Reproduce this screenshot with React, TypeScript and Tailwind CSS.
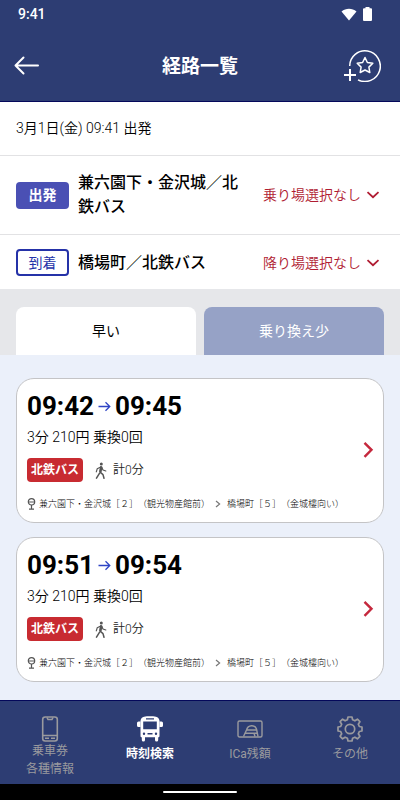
import { type FunctionComponent, type ReactNode } from "react";

interface StopRowProps {
  badge: string;
  badgeClass: string;
  name: string;
  action: string;
  rowClass: string;
}

interface Route {
  departure: string;
  arrival: string;
  summary: string;
  operator: string;
  walk: string;
  from: string;
  to: string;
}

interface NavItemProps {
  icon: ReactNode;
  active?: boolean;
  children: ReactNode;
}

const routes: Route[] = [
  {
    departure: "09:42",
    arrival: "09:45",
    summary: "3分 210円 乗換0回",
    operator: "北鉄バス",
    walk: "計0分",
    from: "兼六園下・金沢城［２］（観光物産館前）",
    to: "橋場町［５］（金城樓向い）",
  },
  {
    departure: "09:51",
    arrival: "09:54",
    summary: "3分 210円 乗換0回",
    operator: "北鉄バス",
    walk: "計0分",
    from: "兼六園下・金沢城［２］（観光物産館前）",
    to: "橋場町［５］（金城樓向い）",
  },
];

const StatusBar: FunctionComponent = () => (
  <div className="flex h-7 items-center justify-between pr-7 pl-[18px] text-white">
    <span className="text-sm font-medium">9:41</span>
    <div className="flex items-center gap-[6px]">
      <svg width="16" height="13" viewBox="0 0 16 13" fill="currentColor">
        <path d="M8 12.500 0.500 3.400C4.800-.1 11.200-.1 15.500 3.400Z" />
      </svg>
      <svg width="9" height="14" viewBox="0 0 9 14" fill="currentColor">
        <path d="M2.500 0h4v1.300H8a1 1 0 0 1 1 1V13a1 1 0 0 1-1 1H1a1 1 0 0 1-1-1V2.300a1 1 0 0 1 1-1h1.500Z" />
      </svg>
    </div>
  </div>
);

const Header: FunctionComponent = () => (
  <header className="border-b border-[#04085a] bg-[#2d3d73] text-white">
    <StatusBar />
    <div className="grid h-[73px] grid-cols-[45px_1fr_40px] items-center pr-[19px] pl-[14px]">
      <button type="button" aria-label="戻る">
        <svg
          width="26"
          height="20"
          viewBox="0 0 26 20"
          fill="none"
          stroke="currentColor"
          strokeWidth="2"
          strokeLinecap="round"
          strokeLinejoin="round"
        >
          <path d="M24 10.500H1.500M9.500 2.500 1.500 10.500l8 8" />
        </svg>
      </button>
      <h1 className="pt-[5px] text-center text-[19px] font-bold">経路一覧</h1>
      <button type="button" aria-label="お気に入りに追加" className="justify-self-end">
        <svg
          width="38"
          height="34"
          viewBox="0 0 38 34"
          fill="none"
          stroke="currentColor"
          strokeWidth="1.500"
          strokeLinejoin="round"
        >
          <path d="M6.700 18A15.300 15.300 0 1 1 15 31.800" />
          <path d="m22 9.500 2.400 5 5.400.8-3.900 3.800.9 5.400-4.800-2.500-4.800 2.500.9-5.400-3.900-3.800 5.400-.8Z" />
          <path d="M1 27h12M7 21v12" strokeWidth="2" />
        </svg>
      </button>
    </div>
  </header>
);

const StopRow: FunctionComponent<StopRowProps> = ({
  badge,
  badgeClass,
  name,
  action,
  rowClass,
}) => (
  <div className={`flex items-center px-4 ${rowClass}`}>
    <span
      className={`flex h-[27px] w-[53px] shrink-0 items-center justify-center rounded text-sm ${badgeClass}`}
    >
      {badge}
    </span>
    <p className="ml-[9px] flex-1 text-base leading-6 font-medium">{name}</p>
    <button
      type="button"
      className="mr-1 ml-3 flex shrink-0 items-center gap-[5px] text-sm font-[350] text-[#b01c32]"
    >
      {action}
      <svg
        width="14"
        height="8"
        viewBox="0 0 14 8"
        fill="none"
        stroke="currentColor"
        strokeWidth="1.800"
      >
        <path d="m1.500 1.200 5.500 5 5.500-5" />
      </svg>
    </button>
  </div>
);

const WalkIcon: FunctionComponent = () => (
  <svg
    width="12"
    height="17"
    viewBox="0 0 12 17"
    fill="none"
    stroke="#555"
    strokeWidth="1.500"
    strokeLinecap="round"
    strokeLinejoin="round"
  >
    <circle cx="6.300" cy="1.900" r="1.500" fill="#555" stroke="none" />
    <path d="M5.800 5 5 10l3 2.600 1 3.600M4.600 11.200 1.500 16.200" />
    <path d="M5.800 5 2.200 6.800l-.9 3M6.600 5l1.400 3 2.800 1" strokeWidth="1.200" />
    <path d="M6.200 5.500 5.500 9.500" strokeWidth="2.400" />
  </svg>
);

const StopIcon: FunctionComponent = () => (
  <svg
    width="9"
    height="12"
    viewBox="0 0 9 12"
    fill="none"
    stroke="#555"
    strokeWidth="1.200"
    className="shrink-0"
  >
    <circle cx="4.500" cy="3.800" r="3.200" />
    <path d="M1.300 4h6.400M4.500 7v4M2 11.200h5" />
  </svg>
);

const RouteCard: FunctionComponent<{ route: Route }> = ({ route }) => (
  <button
    type="button"
    className="flex w-full items-center rounded-[18px] border border-[#c4c4c6] bg-white pt-[9px] pr-[9px] pb-[11px] pl-[10px] text-left"
  >
    <div className="min-w-0 flex-1">
      <div className="flex items-center gap-1 font-[Roboto] text-[26px] leading-9 font-bold">
        <span>{route.departure}</span>
        <svg
          width="13"
          height="11"
          viewBox="0 0 13 11"
          fill="none"
          stroke="#2f45c5"
          strokeWidth="1.300"
        >
          <path d="M.5 5.500h11M7.500 1.200l4.300 4.300-4.300 4.300" />
        </svg>
        <span>{route.arrival}</span>
      </div>
      <p className="mt-px text-sm leading-6 font-[350]">{route.summary}</p>
      <div className="mt-[9px] flex items-center">
        <span className="flex h-6 items-center rounded bg-[#c82b31] px-1 text-xs font-bold text-white">
          {route.operator}
        </span>
        <span className="ml-3 flex items-center gap-[6px] text-xs font-[350] text-[#222]">
          <WalkIcon />
          {route.walk}
        </span>
      </div>
      <div className="mt-[15px] flex items-center text-[9px] leading-[14px] font-light whitespace-nowrap [text-spacing-trim:space-all]">
        <StopIcon />
        <span className="ml-[3px]">{route.from}</span>
        <svg
          width="6"
          height="8"
          viewBox="0 0 6 8"
          fill="none"
          stroke="#777"
          strokeWidth="1.200"
          className="mr-[6px] ml-[5px] shrink-0"
        >
          <path d="M1 1l3.600 3L1 7" />
        </svg>
        <span>{route.to}</span>
      </div>
    </div>
    <svg
      width="11"
      height="17"
      viewBox="0 0 11 17"
      fill="none"
      stroke="#c5283d"
      strokeWidth="2.400"
      className="shrink-0"
    >
      <path d="M1.500 1.800l7 7-7 7" />
    </svg>
  </button>
);

const PhoneIcon: FunctionComponent = () => (
  <svg width="26" height="26" viewBox="0 0 26 26" fill="none" stroke="currentColor" strokeWidth="1.600">
    <rect x="5.700" y="1" width="14.600" height="24" rx="2.500" />
    <path d="M5.700 19.500h14.600M10 1.500l1 2h4l1-2M8 22.300h4M14 22.300h4" />
  </svg>
);

const BusIcon: FunctionComponent = () => (
  <svg width="26" height="26" viewBox="0 0 26 26" fill="currentColor">
    <path
      fillRule="evenodd"
      d="M7 .8C10.500.2 15.500.2 19 .8c1.800.4 3.200 1.800 3.500 4V20c0 .8-.5 1.300-1.300 1.300V24a1.600 1.600 0 0 1-3.200 0v-2.700H8V24a1.600 1.600 0 0 1-3.200 0v-2.700c-.8 0-1.300-.5-1.300-1.300V4.800C3.800 2.600 5.200 1.200 7 .8ZM9 2.300v1.200h8V2.300ZM6.200 5.500v7.800h13.600V5.500ZM7 16.500a1.200 1.200 0 1 0 0 2.400 1.200 1.200 0 0 0 0-2.400ZM19 16.500a1.200 1.200 0 1 0 0 2.400 1.200 1.200 0 0 0 0-2.400ZM10.500 17v1.500h5V17Z"
    />
    <path d="M1.500 5.500h2v5.500h-2A1.500 1.500 0 0 1 0 9.500V7a1.500 1.500 0 0 1 1.500-1.500ZM22.500 5.500h2A1.500 1.500 0 0 1 26 7v2.500a1.500 1.500 0 0 1-1.500 1.500h-2Z" />
  </svg>
);

const CardIcon: FunctionComponent = () => (
  <svg width="26" height="26" viewBox="0 0 26 26" fill="none" stroke="currentColor" strokeWidth="1.400">
    <rect x="1" y="5" width="24" height="16" rx="1.500" />
    <path d="M6.500 20.500 9.500 14C11 8.500 18 8.500 19.500 13l1.500 7.500M9.500 14h10M8 17.300h12M17 17.300l1 3.200" />
  </svg>
);

// eight teeth, 45 degrees apart
const GearIcon: FunctionComponent = () => (
  <svg
    width="26"
    height="26"
    viewBox="0 0 26 26"
    fill="none"
    stroke="currentColor"
    strokeWidth="1.700"
    strokeLinejoin="round"
  >
    <path d="M11 1h4l.6 2.800 2.300 1 2.500-1.600 2.500 2.500-1.600 2.500 1 2.300L25 11v4l-2.700.5-1 2.300 1.600 2.500-2.500 2.500-2.500-1.600-2.300 1L15 25h-4l-.6-2.800-2.300-1-2.500 1.600-2.500-2.500 1.600-2.500-1-2.300L1 15v-4l2.700-.5 1-2.300-1.600-2.500 2.500-2.500 2.500 1.600 2.300-1Z" />
    <circle cx="13" cy="13" r="4.700" />
  </svg>
);

const NavItem: FunctionComponent<NavItemProps> = ({ icon, active, children }) => (
  <a
    href="#"
    aria-current={active ? "page" : undefined}
    className={`flex flex-col items-center pt-[15px] text-center text-xs ${
      active ? "font-bold text-white" : "text-[#9a9a9e]"
    }`}
  >
    {icon}
    {children}
  </a>
);

const App: FunctionComponent = () => {
  return (
    <div
      lang="ja"
      className="flex min-h-screen flex-col bg-[#ebf0fa] font-[Roboto,'Noto_Sans_CJK_JP',sans-serif] text-black"
    >
      <Header />
      <main className="flex-1">
        <section className="divide-y divide-[#e2e2e4] bg-white">
          <p className="px-4 py-4 text-sm leading-[21px] font-[350]">3月1日(金) 09:41 出発</p>
          <StopRow
            badge="出発"
            badgeClass="bg-[#4a50b4] font-bold text-white"
            name="兼六園下・金沢城／北鉄バス"
            action="乗り場選択なし"
            rowClass="py-[15px]"
          />
          <StopRow
            badge="到着"
            badgeClass="border-2 border-[#2532a8] text-[#2532a8]"
            name="橋場町／北鉄バス"
            action="降り場選択なし"
            rowClass="pt-[14px] pb-[13px]"
          />
        </section>
        <div role="tablist" className="grid grid-cols-2 gap-2 bg-[#e6e7ea] px-4 pt-[18px]">
          <button
            type="button"
            role="tab"
            aria-selected="true"
            className="h-12 rounded-t-lg bg-white text-sm"
          >
            早い
          </button>
          <button
            type="button"
            role="tab"
            aria-selected="false"
            className="h-12 rounded-t-lg bg-[#96a2c6] text-sm text-white"
          >
            乗り換え少
          </button>
        </div>
        <div className="flex flex-col gap-[14px] px-4 pt-[23px] pb-4">
          {routes.map((route) => (
            <RouteCard key={route.departure} route={route} />
          ))}
        </div>
      </main>
      <nav className="grid h-[84px] grid-cols-4 border-t border-[#04085a] bg-[#2d3d73]">
        <NavItem icon={<PhoneIcon />}>
          <span className="leading-[18px]">
            乗車券
            <br />
            各種情報
          </span>
        </NavItem>
        <NavItem icon={<BusIcon />} active>
          <span className="mt-[3px] leading-[18px]">時刻検索</span>
        </NavItem>
        <NavItem icon={<CardIcon />}>
          <span className="mt-[3px] leading-[18px]">ICa残額</span>
        </NavItem>
        <NavItem icon={<GearIcon />}>
          <span className="mt-[3px] leading-[18px]">その他</span>
        </NavItem>
      </nav>
      <div className="flex h-4 items-center justify-center bg-black">
        <div className="h-[2px] w-[74px] rounded-full bg-white" />
      </div>
    </div>
  );
};

export default App;
